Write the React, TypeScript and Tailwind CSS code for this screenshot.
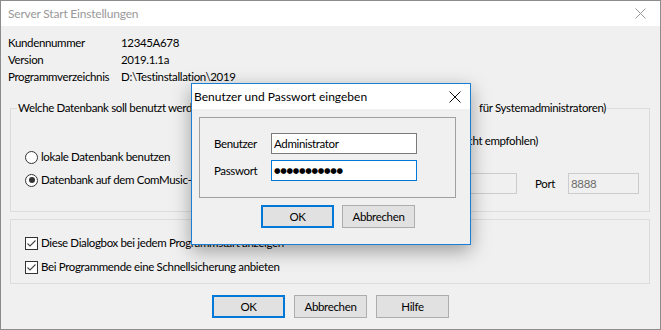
import React from "react";

const font = { fontFamily: 'Lato, "Noto Sans", sans-serif' };

function Radio({ checked, label }: { checked?: boolean; label: string }) {
  return (
    <div className="flex items-center h-[16px]">
      <div className="w-[13px] h-[13px] rounded-full border border-[#333333] bg-white flex items-center justify-center">
        {checked && <div className="w-[6px] h-[6px] rounded-full bg-[#333333]" />}
      </div>
      <span className="ml-[3px] whitespace-nowrap">{label}</span>
    </div>
  );
}

function Check({ label }: { label: string }) {
  return (
    <div className="flex items-center h-[16px]">
      <div className="w-[13px] h-[13px] border border-[#333333] bg-white flex items-center justify-center">
        <svg width="11" height="11" viewBox="0 0 11 11">
          <polyline points="1.5,5.5 4,8 9.5,2.5" fill="none" stroke="#444" strokeWidth="1.1" />
        </svg>
      </div>
      <span className="ml-[3px] whitespace-nowrap">{label}</span>
    </div>
  );
}

function Btn({ label, def }: { label: string; def?: boolean }) {
  return (
    <div
      className={
        "w-[73px] h-[23px] flex items-center justify-center bg-[#e1e1e1] " +
        (def ? "border-2 border-[#0078d7]" : "border border-[#adadad]")
      }
    >
      {label}
    </div>
  );
}

export default function App() {
  return (
    <div
      className="relative w-[661px] h-[330px] border border-[#8c8c8c] bg-[#f0f0f0] text-[11.5px] leading-[16px] tracking-[-0.35px] text-black overflow-hidden"
      style={font}
    >
      {/* title bar */}
      <div className="h-[25px] bg-white flex items-center justify-between pl-[7px] pr-[14px] text-[#999999] text-[12px] tracking-[-0.2px]">
        <span>Server Start Einstellungen</span>
        <svg width="11" height="11" viewBox="0 0 11 11">
          <path d="M0.5 0.5 L10.5 10.5 M10.5 0.5 L0.5 10.5" stroke="#9a9a9a" strokeWidth="1" />
        </svg>
      </div>

      {/* info */}
      <div className="pt-[8px] pl-[7px]">
        <div className="flex h-[17px] items-center">
          <span className="w-[113px]">Kundennummer</span>
          <span>12345A678</span>
        </div>
        <div className="flex h-[17px] items-center">
          <span className="w-[113px]">Version</span>
          <span>2019.1.1a</span>
        </div>
        <div className="flex h-[17px] items-center">
          <span className="w-[113px]">Programmverzeichnis</span>
          <span>D:\Testinstallation\2019</span>
        </div>
      </div>

      {/* group 1 */}
      <fieldset className="ml-[9px] mr-[10px] mt-[15px] h-[112px] border border-[#dcdcdc] px-0">
        <legend className="ml-[6px] px-[1px] w-[590px] flex justify-between whitespace-nowrap">
          <span>Welche Datenbank soll benutzt werden?</span>
          <span>für Systemadministratoren)</span>
        </legend>
        <div className="flex">
          <div className="pl-[14px] pt-[33px] flex flex-col gap-[7px]">
            <Radio label="lokale Datenbank benutzen" />
            <Radio checked label="Datenbank auf dem ComMusic-Server" />
          </div>
          <div className="flex-1 flex flex-col items-end">
            <div className="mt-[17px] mr-[111px] whitespace-nowrap h-[16px] flex items-center">
              nicht empfohlen)
            </div>
            <div className="mt-[24px] mr-[10px] flex items-center">
              <div className="w-[120px] h-[21px] border border-[#cccccc] bg-[#f0f0f0]" />
              <span className="ml-[18px] mr-[13px]">Port</span>
              <div className="w-[71px] h-[21px] border border-[#cccccc] bg-[#f0f0f0] text-[#6d6d6d] pl-[2px] flex items-center">
                8888
              </div>
            </div>
          </div>
        </div>
      </fieldset>

      {/* group 2 */}
      <div className="ml-[9px] mr-[10px] mt-[7px] h-[65px] border border-[#dcdcdc] pl-[14px] pt-[15px] flex flex-col gap-[8px]">
        <Check label="Diese Dialogbox bei jedem Programmstart anzeigen" />
        <Check label="Bei Programmende eine Schnellsicherung anbieten" />
      </div>

      {/* buttons */}
      <div className="mt-[11px] flex justify-center gap-[9px]">
        <Btn label="OK" def />
        <Btn label="Abbrechen" />
        <Btn label="Hilfe" />
      </div>

      {/* modal */}
      <div className="absolute left-[190px] top-[82px] w-[280px] h-[162px] border border-[#1a7fd4] bg-[#f0f0f0] shadow-[0_6px_18px_rgba(0,0,0,0.35)]">
        <div className="h-[25px] bg-white flex items-center justify-between pl-[2px] pr-[9px] text-[12px] tracking-normal">
          <span>Benutzer und Passwort eingeben</span>
          <svg width="12" height="12" viewBox="0 0 12 12">
            <path d="M0.5 0.5 L11.5 11.5 M11.5 0.5 L0.5 11.5" stroke="#111" strokeWidth="1" />
          </svg>
        </div>
        <div className="ml-[7px] mt-[8px] w-[257px] h-[81px] border border-[#a0a0a0] pl-[14px] pt-[15px] flex flex-col gap-[6px]">
          <div className="flex items-center">
            <span className="w-[57px]">Benutzer</span>
            <div className="w-[146px] h-[21px] border border-[#7a7a7a] bg-white pl-[2px] flex items-center">
              Administrator
            </div>
          </div>
          <div className="flex items-center">
            <span className="w-[57px]">Passwort</span>
            <div
              className="w-[146px] h-[21px] border border-[#0078d7] bg-white pl-[2px] flex items-center text-[7.5px] tracking-[-0.3px]"
              style={{ fontFamily: '"DejaVu Sans", sans-serif' }}
            >
              ●●●●●●●●●●●
            </div>
          </div>
        </div>
        <div className="ml-[69px] mt-[7px] flex gap-[8px]">
          <Btn label="OK" def />
          <Btn label="Abbrechen" />
        </div>
      </div>
    </div>
  );
}
